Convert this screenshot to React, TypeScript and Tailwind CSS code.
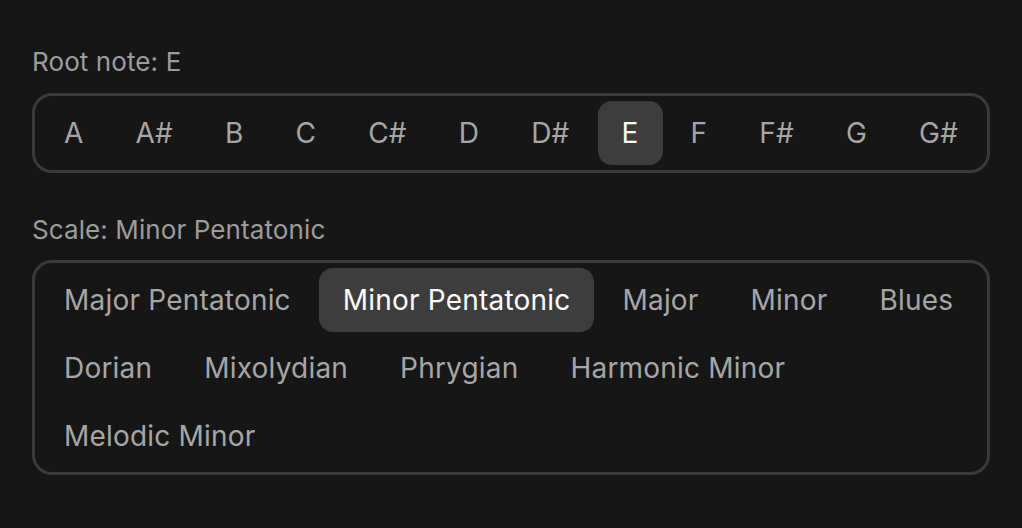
import React, { useState } from "react";

const NOTES = ["A", "A#", "B", "C", "C#", "D", "D#", "E", "F", "F#", "G", "G#"];
const SCALES = [
  "Major Pentatonic",
  "Minor Pentatonic",
  "Major",
  "Minor",
  "Blues",
  "Dorian",
  "Mixolydian",
  "Phrygian",
  "Harmonic Minor",
  "Melodic Minor",
];

export default function App() {
  const [root, setRoot] = useState("E");
  const [scale, setScale] = useState("Minor Pentatonic");
  return (
    <div
      className="min-h-[528px] w-full bg-[#161616] px-[32px] pt-[42px]"
      style={{ fontFamily: "Inter, 'Noto Sans', sans-serif" }}
    >
      <div className="text-[26px] leading-[40px] tracking-[0.1px] text-[#9c9c9c]">Root note: {root}</div>
      <div className="mt-[11px] flex w-fit gap-[4px] rounded-[20px] border-[3px] border-[#3a3a3a] p-[5px]">
        {NOTES.map((n) => (
          <button
            key={n}
            onClick={() => setRoot(n)}
            className={
              "h-[64px] rounded-[14px] px-[24px] text-[28px] tracking-[0.2px] " +
              (n === root ? "bg-[#3d3d3d] text-white" : "text-[#a6a6a6]")
            }
          >
            {n}
          </button>
        ))}
      </div>
      <div className="mt-[37px] text-[26px] leading-[40px] tracking-[0.1px] text-[#9c9c9c]">Scale: {scale}</div>
      <div className="mt-[10px] flex flex-wrap gap-[4px] rounded-[20px] border-[3px] border-[#3a3a3a] px-[5px] pt-[5px] pb-[4px]">
        {SCALES.map((s) => (
          <button
            key={s}
            onClick={() => setScale(s)}
            className={
              "h-[64px] rounded-[14px] px-[24px] text-[28px] tracking-[0.2px] " +
              (s === scale ? "bg-[#3d3d3d] text-white" : "text-[#a6a6a6]")
            }
          >
            {s}
          </button>
        ))}
      </div>
    </div>
  );
}
